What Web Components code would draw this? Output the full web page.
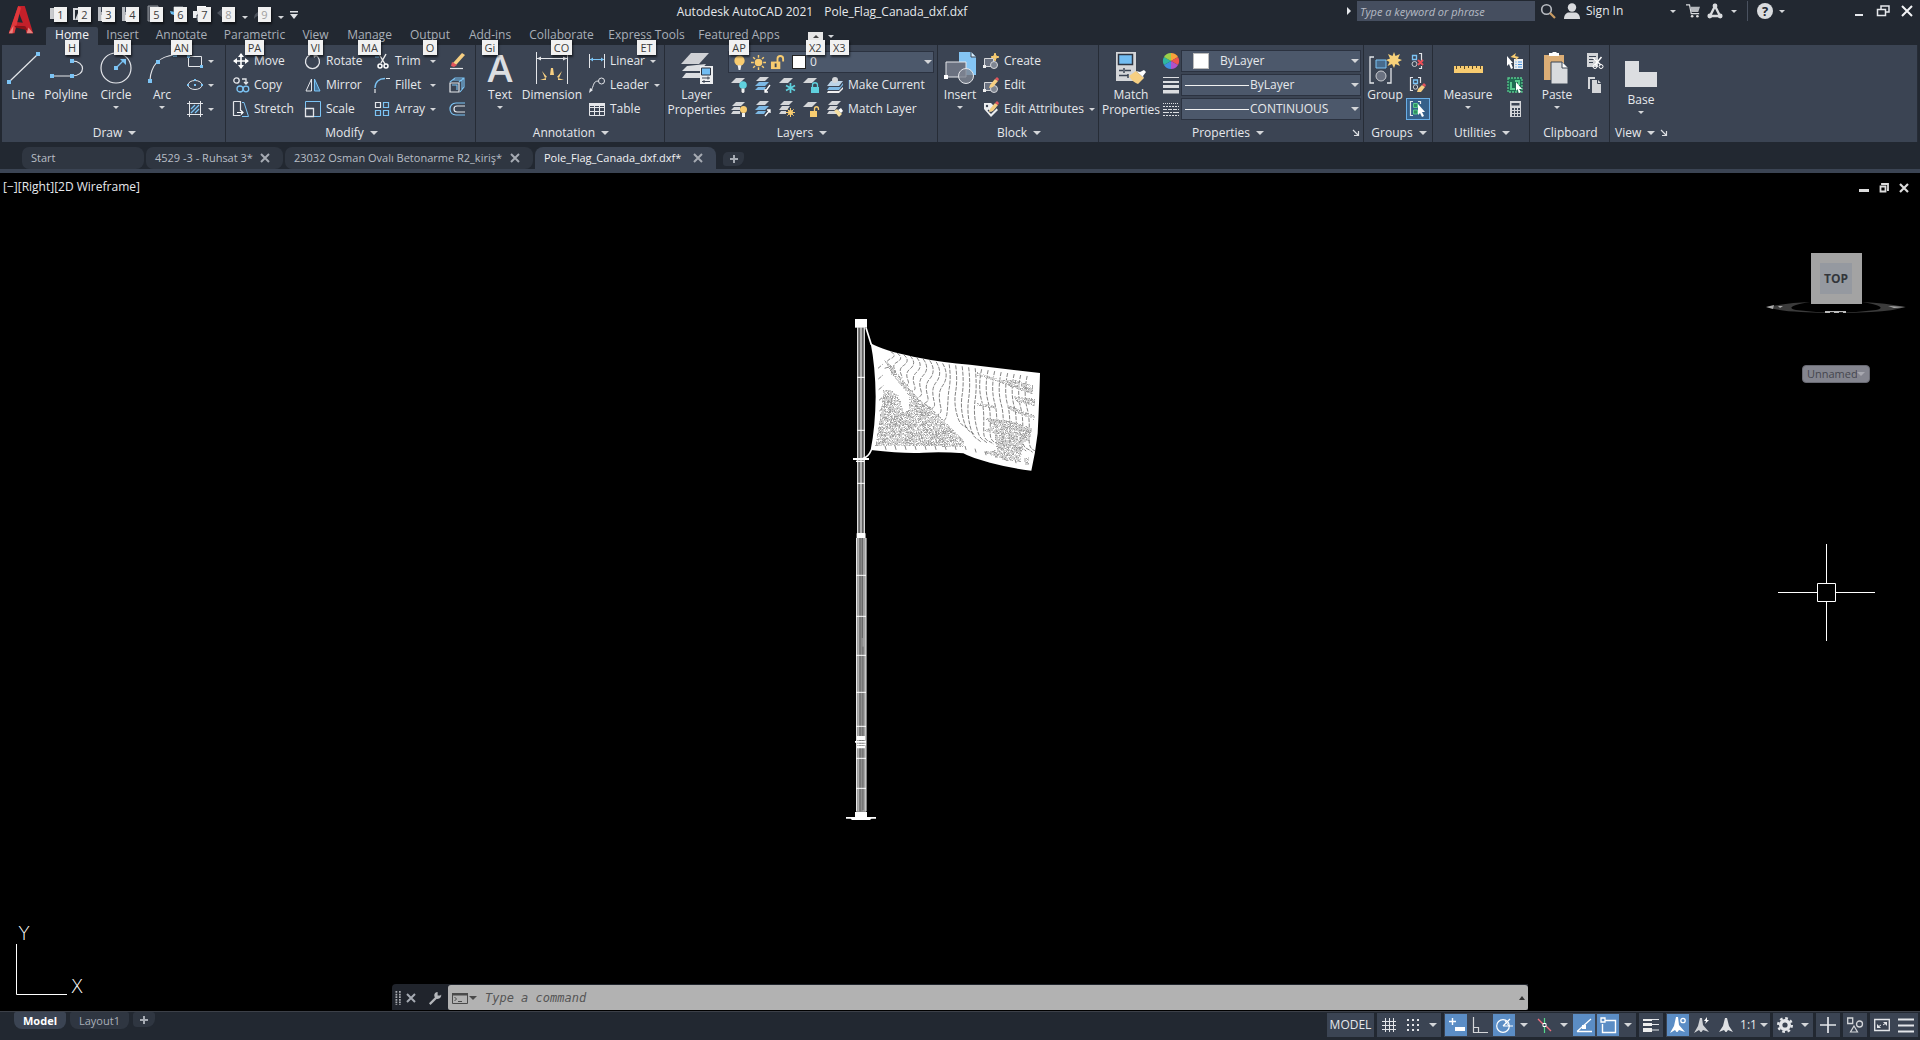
<!DOCTYPE html>
<html lang="en">
<head>
<meta charset="utf-8">
<title>Autodesk AutoCAD 2021 - Pole_Flag_Canada_dxf.dxf</title>
<style>
  html, body { height: 100%; margin: 0; background: #000; }
  body {
    --bar: #222831; --panel: #3b4453; --edge: #262c36; --text: #e6e8ec; --dim: #a9afb8;
    --field: #4c586b; --hot: #5b8dc5;
    font-family: "Open Sans", "Noto Sans", sans-serif; font-size: 12px; line-height: 16px; color: var(--text);
  }
</style>
</head>
<body>
<cad-app></cad-app>
<script>
const I = {
  logo: [32, '<path d="M3 30 13 1h7l9 29h-7l-2-7-10-1-3 8z" fill="#c4202a"/><path d="M14 9 11 18l7 1z" fill="#222831"/><path d="M3 30 13 1l3 2L9 30z" fill="#e0383c"/><path d="m9 22 12 1 2 4-13-3z" fill="#8e1218"/><path d="m3 30 5-8-1 8zM22 30l2-6 5 6z" fill="#e8837f"/>'],
  newf: [16, '<path d="M1 2h9v11H1z" fill="#c9cbce"/><path d="M6 4h9v11H6z" fill="#e4e6ea"/>'],
  open: [16, '<path d="M1 14V3h5l2 2h5v3" fill="none" stroke="#d6d8dc" stroke-width="2"/><path d="m2 14 3-7h11l-3 7z" fill="#d6d8dc"/>'],
  save: [16, '<path d="M1 1h14v14H1z" fill="#b9bcc1"/><path d="M4 1h8v5H4z" fill="#3b4453"/><path d="M6 1h3v4H6zM4 9h8v6H4z" fill="#eee"/>'],
  web: [16, '<path d="M3 0h10v15H3z" fill="#595e67" stroke="#8d9199"/>'],
  plotw: [16, '<path d="M5 1h9v8H5z" fill="#4b5260" stroke="#9aa0a9"/><path d="m1 5 5 1 2 4-6-2z" fill="#6cc0f2"/>'],
  print: [16, '<path d="M4 0h9v5H4z" fill="#fff"/><path d="M0 5h16v7H0z" fill="#eceef0"/><path d="M4 9h9v6H4z" fill="#fff" stroke="#3b4453"/>'],
  undo: [16, '<path d="M0 7 6 2v3c6 0 9 3 9 8-2-3-5-4-9-4v3z" fill="#4d535d"/>'],
  redo: [16, '<path d="M16 7 10 2v3C4 5 1 8 1 13c2-3 5-4 9-4v3z" fill="#4d535d"/>'],
  more: [12, '<path d="M2 2h8v1.500H2z" fill="#dfe1e4"/><path d="M2 5h8L6 10z" fill="#dfe1e4"/>'],
  right: [10, '<path d="m3 1 4 4-4 4z" fill="#e6e8ec"/>'],
  glass: [16, '<circle cx="6.500" cy="6.500" r="4.800" fill="none" stroke="#b9bdc3" stroke-width="1.600"/><path d="m10 10 5 5" stroke="#c89b62" stroke-width="2.200"/>'],
  user: [16, '<circle cx="8" cy="4.500" r="4.200" fill="#d9dbde"/><path d="M0 16c0-5 3-6.500 5-6.500h6c2 0 5 1.500 5 6.500z" fill="#d9dbde"/>'],
  cart: [16, '<path d="M0 1h4l2 10h9" fill="none" stroke="#d9dbde" stroke-width="1.400"/><path d="M5 3h11l-2 6H6z" fill="#b5b8bd"/><circle cx="7" cy="14" r="1.500" fill="#ddd"/><circle cx="13" cy="14" r="1.500" fill="#ddd"/>'],
  adesk: [16, '<path d="M8 3 3 13h10z" fill="none" stroke="#d9dbde" stroke-width="2.400"/><circle cx="8" cy="3" r="2.400" fill="#d9dbde"/><circle cx="2.800" cy="13" r="2.400" fill="#d9dbde"/><circle cx="13.200" cy="13" r="2.400" fill="#d9dbde"/>'],
  help: [16, '<circle cx="8" cy="8" r="8" fill="#d9dbde"/><text x="8" y="13" font-size="13" font-weight="700" text-anchor="middle" fill="#222831">?</text>'],
  min: [14, '<path d="M3 10h8v2H3z" fill="#e6e8ec"/>'],
  restore: [14, '<path d="M5 5V2h8v6h-3M1.500 5.500h8v6h-8z" fill="none" stroke="#e6e8ec" stroke-width="1.500"/>'],
  close: [14, '<path d="m2 2 10 10M12 2 2 12" stroke="#f2f3f5" stroke-width="2"/>'],
  line: [32, '<path d="M3 29 30 3" stroke="#e4e6ea" stroke-width="1.200"/><path d="M0 28h4v4H0zM29 0h4v4h-4z" fill="#7cc4f5"/>'],
  pline: [32, '<path d="M2 24h20M22 9c14 0 14 15 0 15" fill="none" stroke="#e4e6ea" stroke-width="1.200"/><path d="M0 22h4v4H0zM20 22h4v4h-4zM20 7h4v4h-4z" fill="#7cc4f5"/>'],
  circle: [32, '<circle cx="16" cy="16" r="15" fill="none" stroke="#e4e6ea" stroke-width="1.200"/><path d="m16 16 8-8" stroke="#7cc4f5" stroke-width="1.300"/><path d="M14 14h4v4h-4zM20 7h6v6z" fill="#7cc4f5"/>'],
  arc: [32, '<path d="M4 28C5 15 12 4 29 3" fill="none" stroke="#e4e6ea" stroke-width="1.200"/><path d="M2 27h4v4H2zM10 8h4v4h-4zM27 1h4v4h-4z" fill="#7cc4f5"/>'],
  rect: [16, '<path d="M1.500 3.500h13v10h-13z" fill="none" stroke="#e4e6ea"/><path d="M0 2h3v3H0zM13 12h3v3h-3z" fill="#7cc4f5"/>'],
  ellipse: [16, '<ellipse cx="8" cy="8" rx="7" ry="4.500" fill="none" stroke="#e4e6ea"/><path d="M7 7h2v2H7zM0 7h2v2H0zM14 7h2v2h-2zM7 2h2v2H7z" fill="#7cc4f5"/>'],
  hatch: [16, '<path d="M2.500 0v16M13.500 0v16M0 2.500h16M0 13.500h16" stroke="#e4e6ea"/><path d="m4 8 4-4M4 12l8-8M8 12l4-4" stroke="#7cc4f5" stroke-width="1.300"/>'],
  move: [16, '<path d="M8 1v14M1 8h14" stroke="#fff" stroke-width="1.600"/><path d="m8 0 3 4H5zM8 16l3-4H5zM0 8l4-3v6zM16 8l-4-3v6z" fill="#fff"/>'],
  copy: [16, '<circle cx="3.500" cy="3.500" r="2.700" fill="none" stroke="#e4e6ea" stroke-width="1.300"/><path d="M9 2h4v5m-2-2 2 2 2-2" fill="none" stroke="#e4e6ea" stroke-width="1.300"/><circle cx="7" cy="12" r="3" fill="none" stroke="#7cc4f5" stroke-width="1.300"/><circle cx="13" cy="12" r="2.800" fill="none" stroke="#7cc4f5" stroke-width="1.300"/>'],
  stretch: [16, '<path d="M.5.500h7V10M.5.500v14h7" fill="none" stroke="#e4e6ea" stroke-width="1.200"/><path d="M4 11.500h6m-2-2 2 2-2 2" fill="none" stroke="#fff" stroke-width="1.200"/><path d="M9 1.500h2l4.500 14H9" fill="none" stroke="#7cc4f5"/>'],
  rotate: [16, '<path d="M10 2a7 7 0 1 1-5 0" fill="none" stroke="#e4e6ea" stroke-width="1.300"/><path d="m8 0 5 2-4 3z" fill="#e4e6ea"/>'],
  mirror: [16, '<path d="M6.500 2v12H1z" fill="none" stroke="#e4e6ea"/><path d="M9.500 2v12H15z" fill="#47779e" stroke="#7cc4f5"/>'],
  scale: [16, '<path d="M.5.500h15v15H.500z" fill="none" stroke="#7cc4f5"/><path d="M.5 7.500h8v8h-8z" fill="none" stroke="#e4e6ea" stroke-width="1.300"/>'],
  trim: [16, '<path d="m5 1 6 10M12 1 7 10" stroke="#eee" stroke-width="1.400"/><circle cx="6" cy="13" r="2" fill="none" stroke="#fff" stroke-width="1.500"/><circle cx="12" cy="13" r="2" fill="none" stroke="#fff" stroke-width="1.500"/><path d="M1 4h4" stroke="#7cc4f5"/>'],
  fillet: [16, '<path d="M1 16v-4M12 1.500h4" stroke="#e4e6ea" stroke-width="1.200"/><path d="M1 11C1 5 5 1.500 11 1.500" fill="none" stroke="#7cc4f5" stroke-width="1.300"/>'],
  array: [16, '<path d="M1.500 1.500h5v5h-5z" fill="none" stroke="#e4e6ea" stroke-width="1.200"/><path d="M9.500 1.500h5v5h-5zM1.500 9.500h5v5h-5zM9.500 9.500h5v5h-5z" fill="none" stroke="#7cc4f5" stroke-width="1.200"/>'],
  erase: [16, '<path d="m4 10 9-10 3 2-9 10z" fill="#f6cf82"/><path d="m3 9-1 4 3 1 3-2z" fill="#e4545c"/><path d="M1 15.500h13" stroke="#e4e6ea" stroke-width="1.200"/>'],
  explode: [16, '<path d="M1 6h9v9H1z" fill="none" stroke="#e4e6ea" stroke-width="1.200"/><path d="m1 5 5-4h9v9l-4 5M10 5l5-4M4 3h9v9M3 8h5v5" fill="none" stroke="#7cc4f5" stroke-width="1.100"/>'],
  offset: [16, '<path d="M16 2H7C-1 2-1 14 7 14h9" fill="none" stroke="#7cc4f5" stroke-width="1.200"/><path d="M16 5H8c-4 0-4 6 0 6h8" fill="none" stroke="#e4e6ea" stroke-width="1.200"/>'],
  text: [32, '<text x="16" y="30" font-size="38" font-weight="600" text-anchor="middle" fill="#dcdee1">A</text>'],
  dim: [32, '<path d="M.5 0v32M31.500 0v32" stroke="#e4e6ea"/><path d="M1 6.500h30" stroke="#e4e6ea"/><path d="m1 6.500 4-2v4zM31 6.500l-4-2v4z" fill="#e4e6ea"/><path d="m15 16 2 0 1 7h-4zM6 19l5 6-2 1zM26 19l-5 6 2 1zM4 28l6-2v2zM28 28l-6-2v2z" fill="#f6cf82"/>'],
  linear: [16, '<path d="M.5 1v14M15.500 1v14" stroke="#e4e6ea"/><path d="M1 6.500h14" stroke="#7cc4f5"/><path d="m1 6.500 3-2v4zM15 6.500l-3-2v4z" fill="#7cc4f5"/>'],
  leader: [16, '<circle cx="12.500" cy="4" r="3" fill="none" stroke="#e4e6ea"/><path d="M9.500 4c-6 0-4 5-8 10" fill="none" stroke="#e4e6ea"/><path d="m0 16 1-5 3 2z" fill="#e4e6ea"/>'],
  table: [16, '<path d="M.5 2.500h15v12H.500zM.500 6.500h15M.500 10.500h15M5.500 5v9M10.500 5v9" fill="none" stroke="#e4e6ea"/><path d="M0 2h16v3H0z" fill="#e4e6ea"/>'],
  layerp: [32, '<path d="M10 1h18L18 12H0z" fill="#cfd1d5"/><path d="m6 14-5 5h18l6-7" fill="#dcdee1"/><path d="m5 21-4 5h18v-5" fill="#dcdee1"/><path d="M19 14h13v18H19z" fill="#eceef0"/><path d="M20.500 16h9v7h-9z" fill="#72bdf2" stroke="#2d3542"/><path d="M21 26h8m-2-1.500v3M21 29.500h8m-6-1.500v3" stroke="#3b4453"/>'],
  bulb: [16, '<circle cx="8" cy="6" r="5.500" fill="#f8cc70"/><path d="M6 11h4l-1 5H7z" fill="#eee"/>'],
  sun: [16, '<circle cx="8" cy="8" r="4" fill="#f8cc70"/><path d="M8 0v3M8 13v3M0 8h3M13 8h3M2.300 2.300l2 2M11.700 11.700l2 2M13.700 2.300l-2 2M4.300 11.700l-2 2" stroke="#f8cc70" stroke-width="1.500"/>'],
  unlock: [16, '<path d="M1 7h10v8H1z" fill="#f8cc70"/><path d="M8 8V4c0-4 6-4 6 0v3" fill="none" stroke="#f8cc70" stroke-width="2"/><path d="M5 9h2v4H5z" fill="#3b4453"/>'],
  lyoff: [16, '<path d="M5 1h9L9 6H0z" fill="#d4d6d9"/><circle cx="12" cy="8" r="3.800" fill="#5fd0dd"/><path d="M10.500 11.500h3V15l-1 1h-1l-1-1z" fill="#eee"/>'],
  lyiso: [16, '<path d="M5 0h9l-4 4H1z" fill="#d4d6d9"/><path d="M4 5h10l-4 4H0zM3 10h8l-2 3H0z" fill="#7cb8e4"/><path d="m15 8-5 7m0-3v3h3" fill="none" stroke="#fff" stroke-width="1.300"/>'],
  lyfrz: [16, '<path d="M5 1h9L9 6H0z" fill="#d4d6d9"/><path d="M11.500 6v10M7 8.500l9 5M7 13.500l9-5" stroke="#5fd0dd" stroke-width="1.700"/>'],
  lylock: [16, '<path d="M5 1h9L9 6H0z" fill="#d4d6d9"/><path d="M8 10h8v6H8z" fill="#5fd0dd"/><path d="M9.500 10V8c0-3 5-3 5 0v2" fill="none" stroke="#5fd0dd" stroke-width="1.300"/>'],
  lycur: [16, '<path d="M4 4h12l-4 5H0z" fill="#bcd4e8"/><circle cx="8" cy="3" r="3" fill="#d4d6d9"/><path d="M2 10h11l3-4v2l-4 5H0z" fill="#7cb8e4"/><path d="M1 14h11l4-4v2l-4 4H0z" fill="#f0f0f0"/>'],
  lyon: [16, '<path d="M5 1h9l-4 4H1zM3 6h6v3H0zM2 10h7v3H0z" fill="#d4d6d9"/><circle cx="12.500" cy="8.500" r="3.500" fill="#f8cc70"/><path d="M11 12h3v4h-3z" fill="#eee"/>'],
  lyun: [16, '<path d="M5 0h9l-4 4H1z" fill="#d4d6d9"/><path d="M4 5h10l-4 4H0zM3 10h8l-2 3H0z" fill="#7cb8e4"/><path d="m10 15 5-6m-3 0h3v3" fill="none" stroke="#fff" stroke-width="1.300"/>'],
  lythaw: [16, '<path d="M5 0h9l-4 4H1zM3 5h8l-3 4H0zM2 10h5v3H0z" fill="#d4d6d9"/><circle cx="11.500" cy="11.500" r="2.500" fill="#f8cc70"/><path d="M11.500 7v9M7 11.500h9M8.300 8.300l6.400 6.400M14.700 8.300l-6.400 6.400" stroke="#f8cc70"/>'],
  lyunlk: [16, '<path d="M5 1h9L9 6H0z" fill="#d4d6d9"/><path d="M7 10h7v6H7z" fill="#f8cc70"/><path d="M11.500 10V8c0-3 4-3 4 0v1" fill="none" stroke="#f8cc70" stroke-width="1.300"/>'],
  lymatch: [16, '<path d="M5 0h9l-4 4H1zM3 5h8l-3 4H0zM2 10h6l3 3H0z" fill="#d4d6d9"/><path d="m7 10 3-2 5 5-3 3z" fill="#f6dfa0"/><path d="m11 9 3-2 2 3-2 2z" fill="#fff"/>'],
  insert: [32, '<path d="M15 0h12l5 5v18H15z" fill="#84c5f4"/><path d="M27 0v5h5" fill="#d9effc" stroke="#3b4453"/><path d="M2 10h20v15H2z" fill="#6a7180" stroke="#e4e6ea"/><circle cx="22" cy="24" r="7.500" fill="#7e8591" fill-opacity=".8" stroke="#e4e6ea"/><path d="M0 23h4v4H0z" fill="#fff"/>'],
  create: [16, '<path d="M1.500 5.500h9v8h-9z" fill="#6a7180" stroke="#d4d6d9"/><circle cx="11" cy="12" r="3.500" fill="#7e8591" stroke="#d4d6d9"/><path d="m12 0 1 3 3 1-3 1-1 3-1-3-3-1 3-1z" fill="#f8cc70" stroke="#f8cc70"/><path d="M0 12h3v3H0z" fill="#eee"/>'],
  edit: [16, '<path d="M1.500 5.500h9v8h-9z" fill="#6a7180" stroke="#d4d6d9"/><circle cx="11" cy="12" r="3.500" fill="#7e8591" stroke="#d4d6d9"/><path d="m7 8 5-6 3 2-5 6-4 1z" fill="#f6cf82"/><path d="m12 2 2-2 2 2-1 2z" fill="#e4545c"/><path d="M0 12h3v3H0z" fill="#eee"/>'],
  attr: [16, '<path d="M1 2h7l7 7-7 7-7-8z" fill="#eceef0"/><circle cx="4" cy="5" r="1.200" fill="#3b4453"/><path d="m5 9 3 3 5-5" fill="none" stroke="#3b4453" stroke-width="1.500"/><path d="m7 8 5-6 3 2-5 6-4 1z" fill="#f6cf82"/><path d="m12 2 2-2 2 2-1 2z" fill="#e4545c"/>'],
  matchp: [32, '<path d="M1 0h20v29H1z" fill="#d4d6d9"/><path d="M3.500 2.500h14v10h-14z" fill="#72bdf2" stroke="#2d3542" stroke-width="1.500"/><path d="M4 18.500h4m2 0h6M4 23.500h9M9 16v5m4 1v4" stroke="#3b4453" stroke-width="1.500"/><path d="m14 24 7-5 8 7-6 6c-3-1-6-3-9-8z" fill="#f6cf82"/><path d="m21 19 4 1 4-2 2 2-3 4 1 2z" fill="#fff"/>'],
  wheel: [16, '<path d="M8 8V0a8 8 0 0 1 7 4z" fill="#f9a13a"/><path d="M8 8 15 4a8 8 0 0 1 0 8z" fill="#ef5350"/><path d="m8 8 7 4a8 8 0 0 1-7 4z" fill="#b052c9"/><path d="M8 8v8a8 8 0 0 1-7-4z" fill="#3f8fe0"/><path d="M8 8 1 12a8 8 0 0 1 0-8z" fill="#2fb8a0"/><path d="M8 8 1 4a8 8 0 0 1 7-4z" fill="#9bcf4a"/>'],
  lweight: [16, '<path d="M0 0h16v1H0zM0 4h16v2H0zM0 8h16v3H0zM0 13h16v3.500H0z" fill="#dcdee1"/>'],
  ltype: [16, '<path d="M0 2.500h16" stroke="#dcdee1" stroke-dasharray="1 1"/><path d="M0 5.500h16M0 14.500h16" stroke="#dcdee1" stroke-dasharray="2 1"/><path d="M0 8.500h16" stroke="#dcdee1" stroke-dasharray="4 1"/><path d="M0 11.500h16" stroke="#dcdee1" stroke-dasharray="6 1 2 1"/>'],
  group: [32, '<path d="M5 5H1v26h4M18 31h4V16" fill="none" stroke="#e4e6ea" stroke-width="1.300"/><path d="M7 8h10v8H7z" fill="#476b8c" stroke="#7cc4f5"/><circle cx="12" cy="24" r="5" fill="#6a7180" stroke="#c9ccd1"/><path d="m25 0 1.500 4L31 2l-2 4.500 4 1.500-4 2 2 4-4.500-2L25 16l-2-4-4.500 2 2-4L17 8l4-1.500L19 2l4.500 2z" fill="#f8d27a"/>'],
  ungroup: [16, '<path d="M2.500 2.500h4v4h-4z" fill="none" stroke="#7cc4f5" stroke-width="1.300"/><circle cx="4.500" cy="11" r="2.500" fill="none" stroke="#c9ccd1"/><path d="M9 .5h2.500V8M9 15.500h2.500V13" fill="none" stroke="#e4e6ea" stroke-width="1.200"/><path d="m8 7 5 5M13 7l-5 5" stroke="#ea4f57" stroke-width="2"/>'],
  gedit: [16, '<path d="M3 .5H.500v13H3M8 .5h2.500V6" fill="none" stroke="#e4e6ea" stroke-width="1.200"/><path d="M3.500 3h4v3.500h-4z" fill="none" stroke="#7cc4f5" stroke-width="1.300"/><circle cx="5.500" cy="10" r="2.200" fill="none" stroke="#c9ccd1"/><path d="m7 15 1-3 4-4 3 2-4 5z" fill="#f6cf82"/><path d="m12 8 2-2 2 2-1 2z" fill="#e4545c"/>'],
  gsel: [16, '<path d="M3 .5H.500v14H3M8 .5h2.500V3" fill="none" stroke="#e4e6ea" stroke-width="1.200"/><path d="M3.500 2.500h4v4h-4zM3.500 9h4v4h-4z" fill="#2f8f62" stroke="#58c98d"/><path d="m8 3 7 8h-3l2 4-2 1-2-4-2 2z" fill="#fff"/>'],
  measure: [32, '<path d="M2 14h29v7H2z" fill="#f8cc70"/><path d="M4.500 14v3M8.500 14v2M12.500 14v3M16.500 14v2M20.500 14v3M24.500 14v2M28.500 14v3" stroke="#5a4a2a"/>'],
  qsel: [16, '<path d="M7 6h9v10H7z" fill="#eceef0"/><path d="M11 9h4M11 11.500h4M11 14h4" stroke="#3f8fe0"/><path d="M8.500 8.500h1v1h-1zM8.500 11h1v1h-1zM8.500 13.500h1v1h-1z" fill="#3f8fe0"/><path d="m0 3 6 7H4l2 5-2 1-2-5-2 2z" fill="#fff"/><path d="M9 0 3.500 4 9 5.500 8 8l4-4-4-1z" fill="#f8cc70"/>'],
  selall: [16, '<path d="M1 1h14v14H1z" fill="#1f6a52" stroke="#58c98d" stroke-width="1.300" stroke-dasharray="2 1"/><path d="M4 5v7h4M8 4h4v4" fill="none" stroke="#58c98d" stroke-width="2"/><path d="m9 5 6 7h-3l2 3-2 1-1.500-4L9 14z" fill="#fff"/>'],
  calc: [16, '<path d="M3 0h11v16H3z" fill="#d4d6d9"/><path d="M4.500 2h8v2.500h-8z" fill="#3b4453"/><path d="M5 7h2v2H5zM8 7h2v2H8zM11 7h2v2h-2zM5 10h2v2H5zM8 10h2v2H8zM11 10h2v2h-2zM5 13h2v2H5zM8 13h2v2H8zM11 13h2v2h-2z" fill="#3b4453"/>'],
  paste: [32, '<path d="M3 3h20v25H3z" fill="#dcae76"/><path d="M8 4V1h3l1-1h3l1 1h2v3z" fill="#fff"/><path d="M10 10h11l6 6v16H10z" fill="#d9dbde" stroke="#3b4453"/><path d="M21 10v6h6" fill="#fff" stroke="#3b4453"/>'],
  cut: [16, '<path d="M0 0h11v14H0z" fill="#d4d6d9"/><path d="M2 3.500h7M2 6.500h7M2 9.500h4" stroke="#3b4453"/><path d="m6 5 8 7M14.500 4 8 12" stroke="#fff" stroke-width="1.500"/><circle cx="8" cy="13.500" r="2" fill="none" stroke="#fff"/><circle cx="14" cy="13.500" r="2" fill="none" stroke="#fff"/>'],
  clip: [16, '<path d="M1 0h7v2H3v10H1z" fill="#d4d6d9"/><path d="M5 3h6l3 3v10H5z" fill="#d4d6d9"/><path d="M10.500 3v3.500H14" fill="none" stroke="#3b4453"/>'],
  base: [32, '<path d="M0 4h14v11h18v15H0z" fill="#dcdee1"/>'],
  launch: [8, '<path d="m1 1 5 5M6.500 2v4.500H2" fill="none" stroke="#dcdee1" stroke-width="1.200"/>'],
  x: [10, '<path d="m1 1 8 8M9 1 1 9" stroke="#a6abb3" stroke-width="2"/>'],
  plus: [10, '<path d="M5 1v8M1 5h8" stroke="#a6abb3" stroke-width="2"/>'],
  wrench: [16, '<path d="m2 15 8-8" stroke="#b4b7bb" stroke-width="2.500"/><path d="M15 4a4 4 0 1 1-4-3v4h3z" fill="#b4b7bb"/>'],
  grip: [16, '<path d="M5 0v16M9 0v16" stroke="#a9acb1" stroke-width="2" stroke-dasharray="2 1"/>'],
  prompt: [16, '<path d="M.5 3.500h15v10H.500z" fill="none" stroke="#4a4a4a"/><path d="M0 3h16v2.500H0z" fill="#4a4a4a"/><path d="m2.500 7 2 2-2 2M6 11.500h4" fill="none" stroke="#4a4a4a"/>'],
  grid: [16, '<path d="M4.500 1v14M8.500 1v14M12.500 1v14M1 4.500h14M1 8.500h14M1 12.500h14" stroke="#e4e6ea"/>'],
  snap: [16, '<path d="M2 3h12M2 8h12M2 13h12" stroke="#e4e6ea" stroke-width="2" stroke-dasharray="2 3"/>'],
  infer: [16, '<path d="M4.500 1v7M1 4.500h7" stroke="#fff" stroke-width="1.400"/><path d="M7 10h10v4H7z" fill="#fff"/>'],
  ortho: [16, '<path d="M1.500 0v15.500H16M1.500 10.500h5v5" fill="none" stroke="#d4d6d9" stroke-width="1.200"/>'],
  polar: [16, '<circle cx="7" cy="9" r="6.300" fill="none" stroke="#fff" stroke-width="1.200"/><path d="M7 9h10M7 9l7-7" stroke="#fff" stroke-width="1.200"/><path d="m9 4 4 5" stroke="#fff"/>'],
  iso: [16, '<path d="M2 2l5 5M10 9l5 5" stroke="#ef6f7d" stroke-width="1.400"/><path d="M8.500 1v5M8.500 10v6" stroke="#55d88a" stroke-width="1.200"/><path d="M7 6.500h3v3H7z" fill="none" stroke="#fff"/>'],
  otrack: [16, '<path d="M1 14.500h15M1 14.500 15 2" stroke="#fff" stroke-width="1.300"/><path d="M6 8h4v4H6z" fill="#fff"/>'],
  osnap: [16, '<path d="M5 3.500h10.500v12h-13V7" fill="none" stroke="#fff" stroke-width="1.400"/><path d="M1 1h4v4H1z" fill="none" stroke="#fff" stroke-width="1.300"/>'],
  lwt: [16, '<path d="M0 2.500h16M8 7.500h8M8 13h8" stroke="#e4e6ea"/><path d="M0 2h9v2H0zM0 6h9v3H0zM0 11h9v4H0z" fill="#eee"/>'],
  ann1: [16, '<path d="M6 0h2l1 8 6 7-6-2-1.500 2h-1L5 13l-5 3 4-7z" fill="#fff"/><circle cx="13" cy="3.500" r="2.200" fill="none" stroke="#fff" stroke-width="1.300"/>'],
  ann2: [16, '<path d="M6 1h2l1 7 6 7-6-2-1.500 2h-1L5 13l-5 3 4-7z" fill="#cfd1d5"/><path d="m13 0-3 4h2l-1 3 4-4h-2z" fill="#fff"/>'],
  ann3: [16, '<path d="M7 1h2l2 8 4 6-5-2-1.500 2h-1L6 13l-5 2 4-6z" fill="#e0e2e5"/>'],
  gear: [16, '<circle cx="8" cy="8" r="4.300" fill="none" stroke="#e4e6ea" stroke-width="3.400"/><circle cx="8" cy="8" r="6.800" fill="none" stroke="#e4e6ea" stroke-width="2.400" stroke-dasharray="2.700 2.640"/>'],
  bplus: [16, '<path d="M8 0v16M0 8h16" stroke="#e4e6ea" stroke-width="1.700"/>'],
  shapes: [16, '<path d="M.7 1h5v5.500h-5z" fill="none" stroke="#d4d6d9" stroke-width="1.300"/><circle cx="12.500" cy="7" r="3" fill="none" stroke="#d4d6d9" stroke-width="1.300"/><path d="m7 9 3.500 6h-7z" fill="none" stroke="#d4d6d9" stroke-width="1.200"/>'],
  full: [16, '<path d="M.7 2.500h14.600v11H.700z" fill="none" stroke="#e4e6ea" stroke-width="1.300"/><path d="M9 5h4v4zM3 11V7l4 4z" fill="#e4e6ea"/><path d="m9 8 3-2M4 10l3-2" stroke="#e4e6ea"/>'],
  menu: [16, '<path d="M0 2.500h16M0 8.500h16M0 14.500h16" stroke="#e4e6ea" stroke-width="1.800"/>'],
  vmin: [10, '<path d="M0 6h10v3H0z" fill="#dcdcdc"/>'],
  vrest: [10, '<path d="M3 2V1h6v6H8M1.500 3.500h5v5h-5z" fill="none" stroke="#dcdcdc" stroke-width="1.800"/>'],
  vclose: [10, '<path d="m1 1 8 8M9 1 1 9" stroke="#dcdcdc" stroke-width="2.200"/>']
};

function define(tag, css, html, after) {
  customElements.define(tag, class extends HTMLElement {
    connectedCallback() {
      if (this.shadowRoot) return;
      const root = this.attachShadow({ mode: 'open' });
      const t = document.createElement('template');
      t.innerHTML = '<style>*{box-sizing:border-box}button,input,select{font:inherit;color:inherit;background:none;border:0;margin:0;padding:0;appearance:none;outline:0}button{white-space:nowrap}' + css + '</style>' + (typeof html === 'function' ? html(this) : html);
      root.append(t.content.cloneNode(true));
      if (after) after(root, this);
    }
  });
}

define('cad-icon', ':host{display:block;flex:none;width:var(--s);height:var(--s)}svg{display:block;width:100%;height:100%;overflow:visible}',
  el => { const [n, d] = I[el.getAttribute('name')]; const s = el.getAttribute('size') || n;
    return `<style>:host{--s:${s}px}</style><svg viewBox="0 0 ${n} ${n}" aria-hidden="true">${d}</svg>`; });

define('drop-arrow', ':host{display:block;flex:none;width:0;height:0;border:3px solid transparent;border-top-color:#d4d6d9;border-bottom:0}:host([big]){border-width:4px;border-bottom:0}', '');

define('key-tip', `:host{display:block;position:absolute;z-index:3;min-width:13px;height:15px;padding:0 3px;box-sizing:border-box;background:#f1f1f1;color:#3c3c3c;
  text-align:center;font-size:11px;line-height:15px;box-shadow:1px 2px 2px #0009;white-space:nowrap}:host([off]){color:#a0a0a0}`, '<slot></slot>');

define('quick-access', `:host{display:flex;align-items:flex-start}
  button{position:relative;width:24px;height:26px;padding:2px 0 0 1px} .a{width:12px;padding:9px 0 0 2px}.m{padding:4px 0 0 0}
  key-tip{left:6px;top:7px}`,
  () => ['newf', 'open', 'save', 'save', 'web', 'plotw', 'print'].map((n, i) => `<button aria-label="Quick ${i + 1}"><cad-icon name="${n}"></cad-icon><key-tip>${i + 1}</key-tip></button>`).join('') +
    `<button aria-label="Undo"><cad-icon name="undo"></cad-icon><key-tip off>8</key-tip></button><button class="a" aria-label="Undo list"><drop-arrow></drop-arrow></button>
     <button aria-label="Redo"><cad-icon name="redo"></cad-icon><key-tip off>9</key-tip></button><button class="a" aria-label="Redo list"><drop-arrow></drop-arrow></button>
     <button class="a m" aria-label="Customize"><cad-icon name="more"></cad-icon></button>`);

define('info-center', `:host{display:flex;align-items:center;height:22px}
  input{width:178px;height:20px;background:#454e5f;padding:0 3px;font-style:italic;font-size:11px;margin:0 5px 0 3px}
  input::placeholder{color:#b6bbc4;opacity:1}
  button{display:flex;align-items:center;gap:6px}
  .u{width:112px;margin-left:8px}.u drop-arrow{margin-left:auto}
  .c{margin-left:10px}.d{margin-left:7px}.d drop-arrow{margin-left:2px}i{width:1px;height:20px;background:#4a5260;margin:0 9px 0 10px}
  .w{margin-left:10px}.w1{margin-left:67px}`,
  `<cad-icon name="right"></cad-icon><input type="text" aria-label="Search" placeholder="Type a keyword or phrase"><button aria-label="Search"><cad-icon name="glass"></cad-icon></button>
   <button class="u"><cad-icon name="user"></cad-icon><span>Sign In</span><drop-arrow></drop-arrow></button>
   <button class="c" aria-label="Store"><cad-icon name="cart" size="14"></cad-icon></button>
   <button class="d" aria-label="Autodesk App"><cad-icon name="adesk"></cad-icon><drop-arrow></drop-arrow></button><i></i>
   <button aria-label="Help"><cad-icon name="help"></cad-icon><drop-arrow></drop-arrow></button>
   <button class="w1" aria-label="Minimize"><cad-icon name="min"></cad-icon></button>
   <button class="w" aria-label="Restore"><cad-icon name="restore"></cad-icon></button>
   <button class="w" aria-label="Close"><cad-icon name="close"></cad-icon></button>`);

define('title-bar', `:host{display:flex;height:27px;align-items:flex-start;padding:0 6px 0 48px}
  h1{margin:0;padding-top:4px;font:inherit;display:flex;gap:11px;flex:none;white-space:nowrap}
  quick-access,info-center{flex:none}b{flex:1}`,
  `<quick-access></quick-access><b></b><h1><span>Autodesk AutoCAD 2021</span><span>Pole_Flag_Canada_dxf.dxf</span></h1><b></b><info-center></info-center>`);

define('ribbon-tab', `:host{display:block;position:relative;height:18px}
  button{width:100%;height:100%;padding-bottom:2px;color:var(--dim);line-height:16px;text-align:center}
  :host([active]) button{background:var(--panel);color:#f4f5f7;border-radius:2px 2px 0 0}
  span{position:absolute;left:0;right:0;top:13px;display:flex;justify-content:center}key-tip{position:relative}`,
  el => `<button role="tab"><slot></slot></button><span><key-tip>${el.getAttribute('tip')}</key-tip></span>`);

define('ribbon-tabs', `:host{display:grid;grid-template-columns:52px 49px 69px 77px 45px 63px 58px 62px 81px 89px 96px 60px;padding-left:46px;height:18px}
  .e{position:relative;display:flex;align-items:center;gap:5px;padding-left:21px}.e i{width:15px;height:8px;background:#e6e6e6;display:flex;justify-content:center;align-items:center}
  .e u{border:3px solid transparent;border-bottom-color:#444;border-top:0}.e key-tip:nth-of-type(1){left:19px;top:13px}.e key-tip:nth-of-type(2){left:43px;top:13px}`,
  [['Home', 'H'], ['Insert', 'IN'], ['Annotate', 'AN'], ['Parametric', 'PA'], ['View', 'VI'], ['Manage', 'MA'], ['Output', 'O'], ['Add-ins', 'Gi'], ['Collaborate', 'CO'], ['Express Tools', 'ET'], ['Featured Apps', 'AP']]
    .map(([t, k], i) => `<ribbon-tab tip="${k}"${i ? '' : ' active'}>${t}</ribbon-tab>`).join('') +
  `<div class="e"><i><u></u></i><drop-arrow></drop-arrow><key-tip>X2</key-tip><key-tip>X3</key-tip></div>`);

define('big-tool', `:host{display:block;flex:none;width:var(--w)}
  button{width:100%;height:72px;padding-top:3px;display:flex;flex-direction:column;align-items:center;line-height:15px}
  :host([low]) button{padding-top:8px}
  span{margin-top:3px;text-align:center;white-space:pre-line}drop-arrow{margin-top:4px}`,
  el => `<style>:host{--w:${el.getAttribute('w')}px}</style><button><cad-icon name="${el.getAttribute('icon')}"></cad-icon><span>${el.getAttribute('label')}</span>${el.hasAttribute('drop') ? '<drop-arrow></drop-arrow>' : ''}</button>`);

define('small-tool', `:host{display:block;height:24px}button{height:24px;display:flex;align-items:center;gap:5px}
  :host([end]) button{width:62px}:host([end]) drop-arrow{margin-left:auto}
  :host([on]) button{background:#35608a;box-shadow:inset 0 0 0 1px #6aaee6;padding:0 4px;margin:1px 0 0 -4px;height:22px}`,
  el => { const l = el.getAttribute('label') || '';
    return `<button aria-label="${l || el.getAttribute('icon')}"><cad-icon name="${el.getAttribute('icon')}"></cad-icon>${l ? `<span>${l}</span>` : ''}${el.hasAttribute('drop') ? '<drop-arrow></drop-arrow>' : ''}</button>`; });

define('tool-grid', ':host{display:grid;flex:none;grid-template-rows:repeat(3,24px);grid-auto-flow:column;align-items:start}',
  el => `<style>:host{grid-template-columns:${el.getAttribute('cols')};margin-left:${el.getAttribute('gap') || 0}px}</style><slot></slot>`);

define('ribbon-panel', `:host{display:flex;flex-direction:column;flex:none;background:var(--panel);border-right:1px solid var(--edge);height:97px;box-sizing:border-box;width:var(--pw)}
  .b{display:flex;padding-top:4px;height:80px}.t{display:flex;align-items:center;height:15px;padding:0 3px 0 5px}
  .t button{flex:1;display:flex;justify-content:center;align-items:center;gap:6px;height:15px;line-height:15px}
  :host([grow]){flex:1}:host([grow]) .t button{flex:none;margin-right:5px}`,
  el => `<style>:host{--pw:${el.getAttribute('w')}px}</style><div class="b"><slot></slot></div><div class="t"><button>${el.getAttribute('label')}${el.hasAttribute('plain') ? '' : '<drop-arrow big></drop-arrow>'}</button>${el.hasAttribute('launch') ? '<cad-icon name="launch"></cad-icon>' : ''}</div>`);

define('combo-box', `:host{display:flex;align-items:center;height:22px;box-sizing:border-box;background:var(--field);border:1px solid #2b3240;padding:0 1px 0 2px}
  select{flex:1;min-width:0;height:20px}::slotted(*){flex:none}`,
  el => `<slot></slot><select aria-label="${el.getAttribute('label')}"><option>${el.getAttribute('value')}</option></select><drop-arrow big></drop-arrow>`);

define('cad-ribbon', `:host{display:flex;padding:0 2px;height:97px}
  .l{flex:none;width:206px}.l combo-box{margin:2px 0 0}.l combo-box cad-icon{margin:0 3px 0 1px}
  .sw{width:14px;height:14px;background:#fff;border:1px solid #222;margin:0 4px 0 4px;box-sizing:border-box}
  .p{flex:none;width:180px;display:grid;grid-template-rows:repeat(3,22px);row-gap:2px;padding-top:1px;margin-left:2px}
  .pl{width:64px;height:1px;background:#f2f2f2;margin:0 1px}.s2{width:16px;height:16px;background:#fff;border:1px solid #bbb;box-sizing:border-box;margin:0 11px 0 9px}`,
`<ribbon-panel w="224" label="Draw"><big-tool w="42" icon="line" label="Line"></big-tool><big-tool w="44" icon="pline" label="Polyline"></big-tool><big-tool w="56" icon="circle" label="Circle" drop></big-tool><big-tool w="36" icon="arc" label="Arc" drop></big-tool>
 <tool-grid cols="30px" gap="7"><small-tool icon="rect" drop></small-tool><small-tool icon="ellipse" drop></small-tool><small-tool icon="hatch" drop></small-tool></tool-grid></ribbon-panel>
<ribbon-panel w="250" label="Modify"><tool-grid cols="72px 69px 75px 18px" gap="7">
 <small-tool icon="move" label="Move"></small-tool><small-tool icon="copy" label="Copy"></small-tool><small-tool icon="stretch" label="Stretch"></small-tool>
 <small-tool icon="rotate" label="Rotate"></small-tool><small-tool icon="mirror" label="Mirror"></small-tool><small-tool icon="scale" label="Scale"></small-tool>
 <small-tool end icon="trim" label="Trim" drop></small-tool><small-tool end icon="fillet" label="Fillet" drop></small-tool><small-tool end icon="array" label="Array" drop></small-tool>
 <small-tool icon="erase"></small-tool><small-tool icon="explode"></small-tool><small-tool icon="offset"></small-tool></tool-grid></ribbon-panel>
<ribbon-panel w="189" label="Annotation"><big-tool w="48" icon="text" label="Text" drop></big-tool><big-tool w="56" icon="dim" label="Dimension"></big-tool>
 <tool-grid cols="72px" gap="9"><small-tool icon="linear" label="Linear" drop></small-tool><small-tool icon="leader" label="Leader" drop></small-tool><small-tool icon="table" label="Table"></small-tool></tool-grid></ribbon-panel>
<ribbon-panel w="273" label="Layers"><big-tool w="63" icon="layerp" label="Layer&#10;Properties"></big-tool>
 <div class="l"><combo-box label="Layer" value="0"><cad-icon name="bulb" size="15"></cad-icon><cad-icon name="sun" size="15"></cad-icon><cad-icon name="unlock" size="15"></cad-icon><span class="sw"></span></combo-box>
 <tool-grid cols="24px 24px 24px 24px 100px" gap="3" style="grid-template-rows:24px 24px">
 <small-tool icon="lyoff"></small-tool><small-tool icon="lyon"></small-tool><small-tool icon="lyiso"></small-tool><small-tool icon="lyun"></small-tool><small-tool icon="lyfrz"></small-tool><small-tool icon="lythaw"></small-tool><small-tool icon="lylock"></small-tool><small-tool icon="lyunlk"></small-tool>
 <small-tool icon="lycur" label="Make Current"></small-tool><small-tool icon="lymatch" label="Match Layer"></small-tool></tool-grid></div></ribbon-panel>
<ribbon-panel w="161" label="Block"><big-tool w="44" icon="insert" label="Insert" drop></big-tool><tool-grid cols="114px" gap="1"><small-tool icon="create" label="Create"></small-tool><small-tool icon="edit" label="Edit"></small-tool><small-tool icon="attr" label="Edit Attributes" drop></small-tool></tool-grid></ribbon-panel>
<ribbon-panel w="265" label="Properties" launch><big-tool w="64" icon="matchp" label="Match&#10;Properties"></big-tool>
 <tool-grid cols="16px"><small-tool icon="wheel"></small-tool><small-tool icon="lweight"></small-tool><small-tool icon="ltype"></small-tool></tool-grid>
 <div class="p"><combo-box label="Color" value="ByLayer"><span class="s2"></span></combo-box><combo-box label="Lineweight" value="ByLayer"><span class="pl"></span></combo-box><combo-box label="Linetype" value="CONTINUOUS"><span class="pl"></span></combo-box></div></ribbon-panel>
<ribbon-panel w="69" label="Groups"><big-tool w="42" icon="group" label="Group"></big-tool><tool-grid cols="16px" gap="4"><small-tool icon="ungroup"></small-tool><small-tool icon="gedit"></small-tool><small-tool icon="gsel" on></small-tool></tool-grid></ribbon-panel>
<ribbon-panel w="97" label="Utilities"><big-tool w="70" icon="measure" label="Measure" drop></big-tool><tool-grid cols="16px" gap="4"><small-tool icon="qsel"></small-tool><small-tool icon="selall"></small-tool><small-tool icon="calc"></small-tool></tool-grid></ribbon-panel>
<ribbon-panel w="80" label="Clipboard" plain><big-tool w="54" icon="paste" label="Paste" drop></big-tool><tool-grid cols="16px" gap="3"><small-tool icon="cut"></small-tool><small-tool icon="clip"></small-tool></tool-grid></ribbon-panel>
<ribbon-panel grow label="View" launch><big-tool low w="62" icon="base" label="Base" drop></big-tool></ribbon-panel>`);

define('file-tab', `:host{display:flex;flex:none;align-items:center;height:22px;box-sizing:border-box;padding:0 13px 0 9px;background:#2f3641;color:#b9bec6;font-size:11px;border-radius:7px 8px 8px 7px;margin-right:2px;width:var(--w)}
  button{display:flex;align-items:center;justify-content:space-between;flex:1;white-space:nowrap}
  :host([active]){background:var(--panel);color:#f2f3f5;border-radius:8px 8px 0 0}`,
  el => `<style>:host{--w:${el.getAttribute('w')}px}</style><button role="tab"><slot></slot>${el.hasAttribute('fixed') ? '' : '<cad-icon name="x"></cad-icon>'}</button>`);

define('file-tabs', `:host{display:flex;padding:5px 0 0 22px;height:31px;box-sizing:border-box;border-bottom:4px solid var(--panel)}
  button{width:21px;height:14px;margin:5px 0 0 5px;background:#2f3641;border-radius:5px 3px 8px 3px;display:flex;align-items:center;justify-content:center}`,
  `<file-tab w="122" fixed>Start</file-tab><file-tab w="137">4529 -3 - Ruhsat 3*</file-tab><file-tab w="248">23032 Osman Ovalı Betonarme R2_kiriş*</file-tab><file-tab w="181" active>Pole_Flag_Canada_dxf.dxf*</file-tab><button aria-label="New drawing"><cad-icon name="plus"></cad-icon></button>`);

/* The flag model: outline, contour strokes and wire mesh, in thirds of a pixel */
function flagArt() {
  let seed = 7; const rnd = () => (seed = (seed * 16807) % 2147483647) / 2147483647;
  const inside = (x, y, p) => { let c = false; for (let i = 0, j = p.length - 1; i < p.length; j = i++) { const [a, b] = p[i], [d, e] = p[j]; if ((b > y) !== (e > y) && x < (d - a) * (y - b) / (e - b) + a) c = !c; } return c; };
  const areas = [
    [[160, 270], [178, 268], [205, 285], [222, 338], [236, 330], [236, 276], [300, 320], [330, 350], [400, 420], [402, 440], [136, 436], [150, 350]],
    [[160, 178], [178, 190], [240, 265], [260, 290], [236, 285], [195, 235]],
    [[440, 216], [510, 238], [560, 240], [610, 256], [610, 284], [560, 266], [500, 244], [440, 226]],
    [[550, 288], [614, 296], [614, 318], [560, 306]], [[526, 312], [614, 346], [612, 360], [540, 330]],
    [[440, 306], [500, 318], [496, 326], [440, 316]], [[460, 352], [540, 362], [606, 384], [600, 420], [580, 426], [572, 486], [520, 480], [455, 455], [500, 450], [494, 402], [460, 392], [490, 376]],
    [[582, 474], [598, 470], [598, 494], [584, 494]]];
  let dark = '', mid = '';
  for (const p of areas) { const xs = p.map(q => q[0]), ys = p.map(q => q[1]);
    for (let y = Math.floor(Math.min(...ys) / 3) * 3; y < Math.max(...ys); y += 3)
      for (let x = Math.floor(Math.min(...xs) / 3) * 3; x < Math.max(...xs); x += 3)
        if (inside(x + 1, y + 1, p)) { const r = rnd(); if (r < .25) dark += `M${x} ${y}h3v3h-3z`; else if (r < .8) mid += `M${x} ${y}h3v3h-3z`; } }
  let lines = '';
  for (let i = 0; i < 22; i++) { const x = 182 + i * 19.500, t = 155 + i * 2.900 + (i < 8 ? i * 1.500 : 12), end = i < 12 ? 205 + i * 18 : 425 + (i - 12) * 4, s = i < 9 ? 14 : i < 14 ? 4 : -8;
    const b = Math.min(end, 470), h = b - t;
    lines += `M${x} ${t}c${s} ${h * .15} ${s} ${h * .3} 0 ${h * .42}s${-s * .8} ${h * .25} ${i > 9 ? 6 : -6} ${h * .4}s${i > 9 ? 16 : -8} ${h * .12} ${i > 9 ? 30 : -12} ${h * .18}`; }
  for (let i = 0; i < 7; i++) lines += `M${144 + i} ${205 + i * 32}l14-12`;
  for (let i = 0; i < 14; i++) lines += `M${165 + i * 30} ${438 + Math.max(0, i - 8) * 8}l4 14`;
  const outline = 'M122 130Q160 152 250 170T420 194L630 219Q628 300 623 400Q616 460 604 512Q540 504 480 488T400 460Q340 455 280 458T122 450Q136 380 137 290Q136 200 122 130z';
  const ring = (x, w, ys) => ys.map(y => `<path d="M${x} ${y}h${w}" stroke="#fff" stroke-width="3"/>`).join('');
  return `<svg viewBox="0 0 690 1590" role="img" aria-label="Flag pole model"><defs><clipPath id="f"><path d="${outline}"/></clipPath></defs>
   <path d="M81 82h24v640H81z" fill="#777"/><path d="M83 82v640M93 82v640M103 82v640" stroke="#eee" stroke-width="3"/><path d="M87.500 82v640M98 82v640" stroke="#3c3c3c" stroke-width="1.500"/>
   <path d="M75 57h36v26H75z" fill="#fff"/>
   <path d="M108 83 124 134M124 450C118 464 112 472 98 476" fill="none" stroke="#fff" stroke-width="5"/>
   ${ring(81, 24, [232, 391, 550])}<path d="M69 477h48" stroke="#fff" stroke-width="6"/><path d="M78 484h24" stroke="#fff" stroke-width="4"/>
   <path d="${outline}" fill="#fff"/><g clip-path="url(#f)"><path d="${lines}" fill="none" stroke="#555" stroke-width="2.200" stroke-dasharray="12 4"/><path d="${mid}" fill="#d2d2d2"/><path d="${dark}" fill="#a2a2a2"/></g>
   <path d="M79 700h29v836H79z" fill="#8d8d8d"/><path d="M80 714v820M108 714v820" stroke="#fff" stroke-width="3"/><path d="M86 714v820M102 714v820" stroke="#ccc" stroke-width="2"/><path d="M90 714v820M97 714v300M99 1040v490" stroke="#4a4a4a" stroke-width="2"/>
   <path d="M81 699h24v15H81z" fill="#fff"/>${ring(78, 30, [826, 949, 1066, 1177, 1279, 1375, 1465])}
   <path d="M81 1308h24v12H81zM75 1323h33v5H75zM81 1331h27v5H81zM81 1338h24v7H81z" fill="#fff"/><path d="M75 1536h36v16H75z" fill="#fff"/><path d="M48 1551h90v5h-14l-4 4H66l-4-4H48z" fill="#fff"/></svg>`;
}

define('flag-model', ':host{display:block;width:230px;height:530px}svg{display:block;width:100%;height:100%}', flagArt);

define('view-cube', `:host{display:flex;flex-direction:column;align-items:center;width:140px}
  .f{width:51px;height:51px;background:#a3a3a3;display:flex;align-items:center;justify-content:center}
  .f button{width:32px;height:31px;background:#9599a0;color:#33363b;font-weight:700;font-size:12px;line-height:31px;text-align:center}
  svg{display:block;width:140px;height:12px;margin-top:-2px}
  label{margin-top:51px;width:68px;height:18px;border-radius:4px;background:#84858f;border:1px solid #686972;color:#44464e;display:flex;align-items:center;padding:0 4px;font-size:11px}
  select{flex:1;min-width:0;line-height:14px;height:16px}label i{border:4px solid transparent;border-top-color:#a7a8b0;border-bottom:0}`,
  `<div class="f"><button>TOP</button></div>
   <svg viewBox="0 0 140 12" aria-hidden="true"><path d="M1 5Q20 1 44 0Q16 5 30 8Q70 13 110 8Q124 5 96 0Q120 1 139 5Q128 9 105 10Q70 12 35 10Q12 9 1 5z" fill="#3b3b3b"/><path d="M0 5l8-2-1 4zM12 4l5 0-3 2zM122 4l18 1-12 1z" fill="#aaa"/><path d="M59 9h21v2h-3v-1h-4v1h-5v-1h-4v1h-5z" fill="#bbb"/></svg>
   <label><select aria-label="Coordinate system"><option>Unnamed</option></select><i></i></label>`);

define('command-line', `:host{display:flex;height:26px;background:#20242c;border-radius:4px 0 0 0;padding-top:1px;box-sizing:border-box;align-items:center}
  .w{margin:0 6px 0 12px}label{flex:1;align-self:stretch;display:flex;align-items:center;gap:1px;background:#b2b2b2;border-radius:3px 3px 2px 2px;padding:0 3px 0 4px}
  input{flex:1;margin-left:7px;font:italic 12px/16px "DejaVu Sans Mono",monospace;color:#333}input::placeholder{color:#555;opacity:1}
  u{border:4px solid transparent;border-top-color:#4a4a4a;border-bottom:0}u.up{border-width:3px;border-bottom:4px solid #333;border-top:0}`,
  `<cad-icon name="grip" size="14"></cad-icon><button aria-label="Close"><cad-icon name="x"></cad-icon></button><button class="w" aria-label="Customize"><cad-icon name="wrench" size="14"></cad-icon></button>
   <label><cad-icon name="prompt"></cad-icon><u></u><input type="text" placeholder="Type a command" aria-label="Command"><u class="up"></u></label>`);

define('drawing-view', `:host{display:block;position:relative;background:#000;flex:1;min-height:0;overflow:hidden}
  header{display:flex;justify-content:space-between;padding:6px 11px 0 3px}header div{display:flex;gap:10px;padding-top:4px}
  flag-model{position:absolute;left:calc(50% - 130px);top:127px}
  view-cube{position:absolute;right:14px;top:80px}
  .cur{position:absolute;right:45px;top:371px;width:97px;height:97px}
  .ucs{position:absolute;left:12px;bottom:15px;width:75px;height:75px}
  .ucs svg,.cur svg{display:block;width:100%;height:100%;overflow:visible}
  command-line{position:absolute;left:392px;right:392px;bottom:1px}`,
  `<header><span>[−][Right][2D Wireframe]</span><div><cad-icon name="vmin"></cad-icon><cad-icon name="vrest"></cad-icon><cad-icon name="vclose"></cad-icon></div></header>
   <flag-model></flag-model><view-cube></view-cube>
   <div class="cur"><svg viewBox="0 0 97 97"><path d="M48.500 0v40M48.500 57v40M0 48.500h40M57 48.500h40M39.500 39.500h18v18h-18z" fill="none" stroke="#fff"/></svg></div>
   <div class="ucs"><svg viewBox="0 0 75 75"><path d="M4.500 23v50.500H55" fill="none" stroke="#fff"/><g fill="#fff" font-family="DejaVu Sans" font-weight="200" font-size="19" text-anchor="middle"><text x="12" y="19">Y</text><text x="65" y="72">X</text></g></svg></div>
   <command-line></command-line>`);

define('status-bar', `:host{display:flex;justify-content:space-between;align-items:flex-start;height:29px;box-sizing:border-box;border-top:1px solid #3c4048;background:var(--bar);padding:0 2px 0 14px}
  nav{display:flex;gap:4px;font-size:11px}nav button{height:17px;line-height:16px;padding:0 9px;background:#2f3641;color:var(--dim);border-radius:2px 2px 8px 8px}
  nav .a{background:var(--panel);color:#fff;font-weight:700}nav .p{height:15px;padding:0 6px;border-radius:3px 3px 8px 4px}
  .s{display:flex;gap:3px;padding-top:1px}.g{display:flex;background:var(--panel);height:24px;align-items:center}
  .g button{display:flex;align-items:center;justify-content:center;height:22px;width:24px;line-height:20px}
  .g .n{width:16px}.g .t{width:47px}.g .o{background:var(--hot);width:22px;margin:0 1px}.g .r{width:32px;gap:3px}`,
  `<nav><button class="a">Model</button><button>Layout1</button><button class="p" aria-label="New layout"><cad-icon name="plus"></cad-icon></button></nav>
   <div class="s">` +
  [['t:MODEL'], ['grid', 'snap', '>'], ['!infer', 'ortho', '!polar', '>', 'iso', '>', '!otrack', '!osnap', '>'], ['lwt'], ['!ann1', 'ann2', 'ann3', 'r'], ['gear', '>'], ['bplus'], ['shapes'], ['full', 'menu']]
    .map(g => '<div class="g">' + g.map(n => n === '>' ? '<button class="n" aria-label="Options"><drop-arrow big></drop-arrow></button>' : n === 'r' ? '<button class="r">1:1<drop-arrow big></drop-arrow></button>' :
      n === 't:MODEL' ? '<button class="t">MODEL</button>' : (k => `<button class="${n[0] === '!' ? 'o' : ''}" aria-label="${k}"><cad-icon name="${k}"></cad-icon></button>`)(n.replace(/^!/, ''))).join('') + '</div>').join('') + '</div>');

define('cad-app', `:host{display:flex;flex-direction:column;height:100vh;min-height:600px;background:var(--bar);position:relative;overflow:hidden}
  .logo{position:absolute;left:6px;top:5px}title-bar,ribbon-tabs,cad-ribbon,file-tabs,status-bar{flex:none}`,
  `<cad-icon class="logo" name="logo" size="30"></cad-icon><title-bar></title-bar><ribbon-tabs></ribbon-tabs><cad-ribbon></cad-ribbon><file-tabs></file-tabs><drawing-view></drawing-view><status-bar></status-bar>`);
</script>
</body>
</html>
